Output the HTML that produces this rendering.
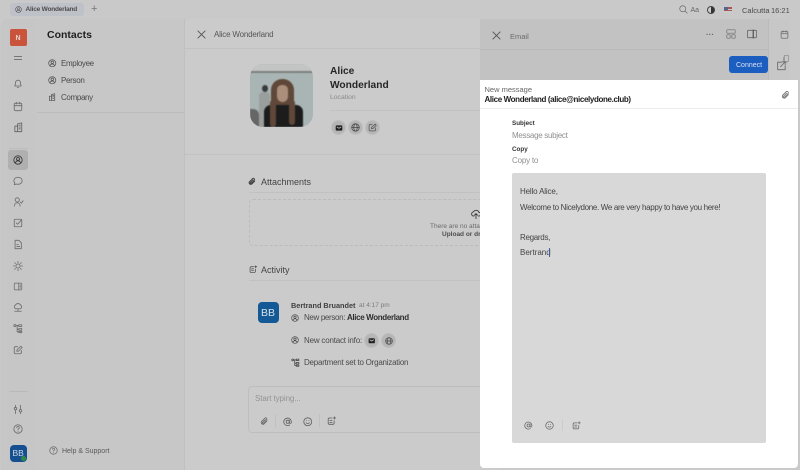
<!DOCTYPE html>
<html><head><meta charset="utf-8"><style>
html,body{margin:0;padding:0}
body{width:800px;height:470px;overflow:hidden;position:relative;background:#c9c9c9;font-family:"Liberation Sans",sans-serif;color:#3a3a3a}
.a{position:absolute}
.t{position:absolute;white-space:nowrap;line-height:1}
svg.i{position:absolute;fill:none;stroke:#6b6b6b;stroke-width:2;stroke-linecap:round;stroke-linejoin:round}
.c{position:absolute;width:15px;height:15px;border-radius:50%;background:#b5b5b5;border:0.5px solid #bebebe;box-sizing:border-box}
</style></head><body>
<svg width="0" height="0" style="position:absolute"><defs>
<symbol id="user" viewBox="0 0 24 24"><circle cx="12" cy="12" r="10"/><circle cx="12" cy="9.500" r="3.500"/><path d="M5.500 19c1.500-3.500 3.800-5 6.500-5s5 1.500 6.500 5"/></symbol>
<symbol id="bld" viewBox="0 0 24 24"><path d="M10 21V4l9-2v19zM10 21H4V9h6M13 7h3M13 11h3M13 15h3"/></symbol>
<symbol id="mail" viewBox="0 0 24 24"><rect x="3" y="5" width="18" height="14" rx="2" fill="#222" stroke="#222"/><path d="M6 9l6 4 6-4" stroke="#ddd"/></symbol>
<symbol id="globe" viewBox="0 0 24 24"><circle cx="12" cy="12" r="10"/><ellipse cx="12" cy="12" rx="4.500" ry="10"/><path d="M2 12h20"/></symbol>
<symbol id="edit" viewBox="0 0 24 24"><path d="M20 13v5a3 3 0 0 1-3 3H6a3 3 0 0 1-3-3V7a3 3 0 0 1 3-3h5"/><path d="M9 15l1-4 9-8 3 3-9 9z"/></symbol>
<symbol id="at" viewBox="0 0 24 24"><circle cx="12" cy="12" r="4"/><path d="M16 8v5.500a2.500 2.500 0 0 0 5 0V12a9.500 9.500 0 1 0-4 8"/></symbol>
<symbol id="smile" viewBox="0 0 24 24"><circle cx="12" cy="12" r="10"/><path d="M8 14.500c2 2.500 6 2.500 8 0M9 9v.5M15 9v.5"/></symbol>
<symbol id="act" viewBox="0 0 24 24"><path d="M13 5H6a3 3 0 0 0-3 3v10a3 3 0 0 0 3 3h9a3 3 0 0 0 3-3v-6"/><path d="M7 11h6M7 16h6M19 2v6M16 5h6"/></symbol>
<symbol id="clip" viewBox="0 0 24 24"><path d="M20 11l-8.500 8.500a5 5 0 0 1-7-7l9-9a3.500 3.500 0 0 1 5 5l-9 9a1.600 1.600 0 0 1-2.500-2.500l8-8"/></symbol>
<symbol id="tree" viewBox="0 0 24 24"><circle cx="4.500" cy="5" r="2.500"/><path d="M7 5h7M14 3h7v4h-7zM14 12h7v4h-7zM14 19h7v3h-7zM10 5v15h4M10 14h4"/></symbol>
</defs></svg>

<!-- top bar -->
<div class="a" style="left:10px;top:3px;width:74px;height:13px;background:#bfc1c9;border-radius:3px"></div>
<svg class="i" style="left:15px;top:6px;stroke:#555" width="7" height="7"><use href="#user"/></svg>
<div class="t" style="left:25.500px;top:7px;font-size:6.500px;font-weight:700;letter-spacing:-.2px;color:#4c4c4c">Alice Wonderland</div>
<div class="t" style="left:91px;top:3.500px;font-size:11px;color:#777">+</div>
<svg class="i" style="left:679px;top:5px;stroke:#666;stroke-width:1.800" width="9" height="9" viewBox="0 0 24 24"><circle cx="10" cy="10" r="8"/><path d="M16 16l6 6"/></svg>
<div class="t" style="left:690.500px;top:6.500px;font-size:7px;color:#666">Aa</div>
<div class="a" style="left:707px;top:5.500px;width:6px;height:6px;border:1px solid #444;border-radius:50%;background:linear-gradient(90deg,#ccc 50%,#333 50%)"></div>
<div class="a" style="left:724px;top:7px;width:8px;height:6px;background:linear-gradient(#a55 0 30%,#ccc 30% 50%,#a55 50% 70%,#ccc 70%)"></div>
<div class="a" style="left:724px;top:7px;width:4px;height:3px;background:#56658f"></div>
<div class="t" style="left:742px;top:6.500px;font-size:7.500px;color:#4a4a4a">Calcutta</div>
<div class="t" style="left:771px;top:6.500px;font-size:7.500px;color:#4a4a4a">16:21</div>

<!-- main panels -->
<div class="a" style="left:1px;top:19px;width:36px;height:451px;background:#c6c6c6;border-radius:5px 0 0 0;border-right:1px solid #bfbfbf"></div>
<div class="a" style="left:37px;top:19px;width:147px;height:451px;background:#c7c7c7;border-right:1px solid #c0c0c0"></div>
<div class="a" style="left:37px;top:112px;width:147px;height:1px;background:#bcbcbc"></div>
<div class="a" style="left:185px;top:19px;width:315px;height:451px;background:#cbcbcb;border-radius:5px 0 0 0"></div>
<div class="a" style="left:185px;top:48px;width:300px;height:1px;background:#c2c2c2"></div>
<div class="a" style="left:185px;top:154px;width:300px;height:1px;background:#c2c2c2"></div>
<div class="a" style="left:480px;top:19px;width:310px;height:62px;background:#c2c2c2;border-radius:0 5px 0 0"></div>
<div class="a" style="left:768px;top:19px;width:22px;height:62px;background:#c7c7c7;border-left:1px solid #bbb;border-radius:0 5px 0 0;box-sizing:border-box"></div>
<div class="a" style="left:480px;top:49px;width:288px;height:1px;background:#bababa"></div>

<!-- sidebar -->
<div class="a" style="left:9.500px;top:29px;width:17px;height:17px;background:#c9533b;border-radius:2px"></div>
<div class="t" style="left:15.500px;top:34.500px;font-size:7px;font-weight:700;color:#e8d5d0">N</div>
<div class="a" style="left:14px;top:56px;width:8px;height:1px;background:#777"></div>
<div class="a" style="left:14px;top:59px;width:8px;height:1px;background:#777"></div>
<svg class="i" style="left:13px;top:78px" width="10" height="11" viewBox="0 0 24 24"><path d="M4 18c2-2 2-5 2-8a6 6 0 0 1 12 0c0 3 0 6 2 8zM10 21h4"/></svg>
<svg class="i" style="left:13px;top:101px" width="10" height="11" viewBox="0 0 24 24"><rect x="3" y="4" width="18" height="18" rx="3"/><path d="M3 10h18M8 2v4M16 2v4"/></svg>
<svg class="i" style="left:13px;top:122px" width="11" height="11"><use href="#bld"/></svg>
<div class="a" style="left:9px;top:148px;width:19px;height:1px;background:#bcbcbc"></div>
<div class="a" style="left:8px;top:150px;width:20px;height:20px;background:#b0b0b0;border-radius:3px"></div>
<svg class="i" style="left:13px;top:155px;stroke:#333" width="10" height="10"><use href="#user"/></svg>
<svg class="i" style="left:13px;top:176px" width="10" height="10" viewBox="0 0 24 24"><path d="M12 3c5.500 0 10 3.500 10 8.500S17.500 20 12 20c-1.500 0-3-.3-4-.7L3 21l1.500-4C3 15.500 2 13.500 2 11.500 2 6.500 6.500 3 12 3z"/></svg>
<svg class="i" style="left:13px;top:197px" width="11" height="10" viewBox="0 0 24 24"><circle cx="9" cy="7" r="5"/><path d="M2 22c0-5 3-8 7-8s7 3 7 8M16 12l3 3 4-6"/></svg>
<svg class="i" style="left:13px;top:218px" width="10" height="10" viewBox="0 0 24 24"><rect x="3" y="3" width="18" height="18" rx="2"/><path d="M8 12l3 3 9-10"/></svg>
<svg class="i" style="left:13px;top:239px" width="10" height="11" viewBox="0 0 24 24"><path d="M5 2h9l6 6v14H5zM9 17h7M9 12h4"/></svg>
<svg class="i" style="left:13px;top:261px" width="10" height="10" viewBox="0 0 24 24"><circle cx="12" cy="12" r="5"/><path d="M12 1v3M12 20v3M1 12h3M20 12h3M4 4l2 2M18 18l2 2M4 20l2-2M18 6l2-2"/></svg>
<svg class="i" style="left:13px;top:282px" width="10" height="9" viewBox="0 0 24 24"><rect x="2" y="3" width="20" height="18" rx="2"/><path d="M14 3v18M17 8h2M17 12h2M17 16h2"/></svg>
<svg class="i" style="left:13px;top:302px" width="10" height="11" viewBox="0 0 24 24"><path d="M6 15a5 5 0 0 1 0-9 7 7 0 0 1 12 0 5 5 0 0 1 0 9zM12 15v5M4 21h16"/></svg>
<svg class="i" style="left:13px;top:323px" width="10" height="11"><use href="#tree"/></svg>
<svg class="i" style="left:13px;top:345px" width="10" height="10"><use href="#edit"/></svg>
<div class="a" style="left:9px;top:391px;width:19px;height:1px;background:#b9b9b9"></div>
<svg class="i" style="left:13px;top:404px" width="10" height="11" viewBox="0 0 24 24"><path d="M6 2v5M6 14v8M18 2v10M18 19v3"/><circle cx="6" cy="10" r="3"/><circle cx="18" cy="15" r="3"/></svg>
<svg class="i" style="left:13px;top:424px" width="10" height="10" viewBox="0 0 24 24"><circle cx="12" cy="12" r="10"/><path d="M9 9a3 3 0 1 1 4.500 2.600c-1 .6-1.500 1.200-1.500 2.400M12 18v.5"/></svg>
<div class="a" style="left:9.500px;top:444.500px;width:17px;height:17px;background:#154f8f;border-radius:4px"></div>
<div class="t" style="left:12.500px;top:449px;font-size:8.500px;color:#cfd8e4">BB</div>
<div class="a" style="left:21px;top:456px;width:5px;height:5px;background:#2e8b45;border-radius:50%"></div>

<!-- contacts -->
<div class="t" style="left:47px;top:30px;font-size:10.500px;font-weight:700;color:#1f1f1f">Contacts</div>
<svg class="i" style="left:48px;top:59px;stroke:#4d4d4d" width="8.500" height="8.500"><use href="#user"/></svg>
<div class="t" style="left:61px;top:60px;font-size:8px;letter-spacing:-.35px;color:#4a4a4a">Employee</div>
<svg class="i" style="left:48px;top:76px;stroke:#4d4d4d" width="8.500" height="8.500"><use href="#user"/></svg>
<div class="t" style="left:61px;top:77px;font-size:8px;letter-spacing:-.3px;color:#4a4a4a">Person</div>
<svg class="i" style="left:48px;top:93px;stroke:#4d4d4d" width="8.500" height="8.500"><use href="#bld"/></svg>
<div class="t" style="left:61px;top:94px;font-size:8px;letter-spacing:-.35px;color:#4a4a4a">Company</div>
<svg class="i" style="left:49px;top:446px" width="9" height="9" viewBox="0 0 24 24"><circle cx="12" cy="12" r="10"/><path d="M9 9a3 3 0 1 1 4.500 2.600c-1 .6-1.500 1.200-1.500 2.400M12 18v.5"/></svg>
<div class="t" style="left:62px;top:447.500px;font-size:7px;color:#5a5a5a">Help &amp; Support</div>

<!-- detail -->
<svg class="i" style="left:197px;top:30px;stroke:#555" width="9" height="9" viewBox="0 0 10 10"><path d="M1 1l8 8M9 1l-8 8" stroke-width="1"/></svg>
<div class="t" style="left:214px;top:30.500px;font-size:8px;letter-spacing:-.2px;color:#565656">Alice Wonderland</div>

<div class="a" style="left:249.500px;top:64px;width:63.500px;height:63px;border-radius:13px;overflow:hidden;background:#a9b4b4">
 <div style="position:absolute;inset:0;filter:blur(.6px)">
 <div class="a" style="left:0;top:0;width:64px;height:7px;background:#c3c5c4"></div>
 <div class="a" style="left:0;top:7px;width:64px;height:1.500px;background:#7d807c"></div>
 <div class="a" style="left:9px;top:28px;width:11px;height:35px;background:#9a9f9e;border-radius:4px 4px 0 0"></div>
 <div class="a" style="left:12px;top:21px;width:6px;height:7px;background:#3a3a3a;border-radius:50%"></div>
 <div class="a" style="left:0;top:45px;width:9px;height:18px;background:#666;border-radius:0 6px 0 0"></div>
 <div class="a" style="left:21px;top:15px;width:23px;height:46px;background:#5f4839;border-radius:11px 11px 5px 5px"></div>
 <div class="a" style="left:14px;top:41px;width:39px;height:22px;background:#1c1c1c;border-radius:7px 7px 0 0"></div>
 <div class="a" style="left:20px;top:36px;width:6px;height:27px;background:#5f4839;border-radius:3px"></div>
 <div class="a" style="left:39px;top:36px;width:6px;height:25px;background:#5f4839;border-radius:3px"></div>
 <div class="a" style="left:27px;top:21px;width:11px;height:17px;background:#ac8e7c;border-radius:6px 6px 7px 7px"></div>
 </div>
</div>
<div class="t" style="left:330px;top:64.500px;font-size:10.200px;font-weight:700;line-height:14px;color:#262626;white-space:normal;width:70px">Alice Wonderland</div>
<div class="t" style="left:330px;top:95px;font-size:6.800px;color:#8a8a8a">Location</div>
<div class="a" style="left:330px;top:110px;width:155px;height:1px;background:#c2c2c2"></div>
<div class="c" style="left:331px;top:120px"></div>
<svg class="i" style="left:334.500px;top:123.500px" width="8" height="8"><use href="#mail"/></svg>
<div class="c" style="left:348px;top:120px"></div>
<svg class="i" style="left:351px;top:123px;stroke:#444" width="9" height="9"><use href="#globe"/></svg>
<div class="c" style="left:365px;top:120px"></div>
<svg class="i" style="left:368px;top:123px;stroke:#555" width="9" height="9"><use href="#edit"/></svg>

<svg class="i" style="left:248px;top:177px;stroke:#444;stroke-width:3" width="8" height="9"><use href="#clip"/></svg>
<div class="t" style="left:261px;top:178px;font-size:9px;color:#444">Attachments</div>
<div class="a" style="left:249px;top:192px;width:240px;height:1px;background:#c1c1c1"></div>
<div class="a" style="left:249px;top:199px;width:240px;height:47px;border:1px dashed #bbb;border-radius:4px;box-sizing:border-box"></div>
<svg class="i" style="left:471px;top:209px;stroke:#333" width="10" height="10" viewBox="0 0 24 24"><path d="M7 17a5 5 0 0 1-1-10 7 7 0 0 1 13 1 4.500 4.500 0 0 1-1 9M12 23V12M8 15l4-4 4 4"/></svg>
<div class="t" style="left:430px;top:223.500px;font-size:6.500px;color:#6b6b6b">There are no attachments</div>
<div class="t" style="left:442px;top:231.500px;font-size:6.500px;font-weight:700;color:#4d4d4d">Upload or drop</div>

<svg class="i" style="left:249px;top:265px;stroke:#444" width="8.500" height="8.500"><use href="#act"/></svg>
<div class="t" style="left:261px;top:266px;font-size:9px;color:#444">Activity</div>
<div class="a" style="left:249px;top:280px;width:240px;height:1px;background:#c1c1c1"></div>
<div class="a" style="left:257.500px;top:302px;width:21.500px;height:21px;background:#135996;border-radius:4px"></div>
<div class="t" style="left:261px;top:308px;font-size:10.500px;color:#d6e0ea">BB</div>
<div class="t" style="left:291px;top:302px;font-size:7.300px;font-weight:700;color:#3f3f3f">Bertrand Bruandet</div>
<div class="t" style="left:359px;top:303px;font-size:6.500px;color:#7c7c7c">at 4:17 pm</div>
<svg class="i" style="left:291px;top:313.500px;stroke:#444" width="8" height="8"><use href="#user"/></svg>
<div class="t" style="left:304px;top:314px;font-size:8px;letter-spacing:-.35px;color:#4a4a4a">New person: <b style="color:#2f2f2f">Alice Wonderland</b></div>
<svg class="i" style="left:291px;top:336px;stroke:#444" width="8" height="8"><use href="#user"/></svg>
<div class="t" style="left:304px;top:337px;font-size:8px;letter-spacing:-.2px;color:#4a4a4a">New contact info:</div>
<div class="c" style="left:364px;top:332.500px"></div>
<svg class="i" style="left:368px;top:336.500px" width="7.500" height="7.500"><use href="#mail"/></svg>
<div class="c" style="left:381px;top:332.500px"></div>
<svg class="i" style="left:385px;top:336.500px;stroke:#444" width="8" height="8"><use href="#globe"/></svg>
<svg class="i" style="left:291px;top:358px;stroke:#444" width="9" height="9"><use href="#tree"/></svg>
<div class="t" style="left:304px;top:358.500px;font-size:8px;letter-spacing:-.23px;color:#4a4a4a">Department set to Organization</div>

<div class="a" style="left:248px;top:386px;width:240px;height:47px;border:1px solid #bebebe;border-radius:4px;box-sizing:border-box"></div>
<div class="t" style="left:255px;top:394.500px;font-size:8px;letter-spacing:-.1px;color:#949494">Start typing...</div>
<svg class="i" style="left:260px;top:417px;stroke:#5c5c5c" width="8.500" height="8.500"><use href="#clip"/></svg>
<div class="a" style="left:275px;top:414px;width:1px;height:13px;background:#c0c0c0"></div>
<svg class="i" style="left:283px;top:416.500px;stroke:#5c5c5c" width="9.500" height="9.500"><use href="#at"/></svg>
<svg class="i" style="left:303px;top:416.500px;stroke:#5c5c5c" width="9.500" height="9.500"><use href="#smile"/></svg>
<div class="a" style="left:319px;top:414px;width:1px;height:13px;background:#c0c0c0"></div>
<svg class="i" style="left:327px;top:416px;stroke:#5c5c5c" width="9.500" height="9.500"><use href="#act"/></svg>

<!-- Email header -->
<svg class="i" style="left:492px;top:31px;stroke:#555" width="9" height="9" viewBox="0 0 10 10"><path d="M1 1l8 8M9 1l-8 8" stroke-width="1"/></svg>
<div class="t" style="left:510px;top:33px;font-size:7.500px;color:#6a6a6a">Email</div>
<div class="t" style="left:706px;top:30.500px;font-size:8px;font-weight:700;color:#666">···</div>
<svg class="i" style="left:726px;top:29px;stroke-width:1.600" width="10" height="10" viewBox="0 0 24 24"><rect x="2" y="2" width="20" height="8" rx="1"/><rect x="2" y="14" width="8" height="8" rx="1"/><rect x="14" y="14" width="8" height="8" rx="1"/></svg>
<svg class="i" style="left:747px;top:29px;stroke:#555;stroke-width:1.600" width="10" height="10" viewBox="0 0 24 24"><rect x="1" y="3" width="22" height="18" rx="3"/><path d="M15 3v18" stroke-width="3"/></svg>
<svg class="i" style="left:780px;top:30px" width="9" height="9" viewBox="0 0 24 24"><rect x="3" y="4" width="18" height="18" rx="3"/><path d="M3 10h18M8 2v4M16 2v4"/></svg>
<div class="a" style="left:729px;top:56px;width:39px;height:17px;background:#1c5dc0;border-radius:3px"></div>
<div class="t" style="left:736px;top:61.500px;font-size:7px;color:#d9e2f1">Connect</div>
<svg class="i" style="left:776px;top:60px;stroke:#666" width="10" height="11" viewBox="0 0 24 24"><path d="M14 4H4v18h18V12M11 15L22 3M15 3h7v7"/></svg>
<svg class="i" style="left:783px;top:55px;stroke:#777;stroke-width:1" width="6" height="8" viewBox="0 0 12 16"><path d="M3 1h8v12H3zM1 4v11h7"/></svg>

<!-- Email panel -->
<div class="a" style="left:480px;top:80px;width:318px;height:388px;background:#fff;border-radius:0 0 4px 4px"></div>
<div class="a" style="left:480px;top:108px;width:318px;height:1px;background:#ececec"></div>
<div class="t" style="left:484.500px;top:86px;font-size:7.500px;color:#666">New message</div>
<div class="t" style="left:484.500px;top:96px;font-size:8px;font-weight:700;letter-spacing:-.37px;color:#1d1d1d">Alice Wonderland (alice@nicelydone.club)</div>
<svg class="i" style="left:781px;top:90px;stroke:#666" width="9" height="10"><use href="#clip"/></svg>
<div class="t" style="left:512px;top:121px;font-size:6.300px;font-weight:700;color:#333">Subject</div>
<div class="t" style="left:512px;top:131.500px;font-size:8px;letter-spacing:-.3px;color:#8f8f8f">Message subject</div>
<div class="t" style="left:512px;top:147px;font-size:6.300px;font-weight:700;color:#333">Copy</div>
<div class="t" style="left:512px;top:156.500px;font-size:8px;letter-spacing:-.2px;color:#8f8f8f">Copy to</div>
<div class="a" style="left:512px;top:173px;width:254px;height:270px;background:#d8d8d8;border-radius:2px"></div>
<div class="t" style="left:520px;top:188px;font-size:8px;letter-spacing:-.15px;color:#444">Hello Alice,</div>
<div class="t" style="left:520px;top:203.500px;font-size:8px;letter-spacing:-.33px;color:#444">Welcome to Nicelydone. We are very happy to have you here!</div>
<div class="t" style="left:520px;top:234px;font-size:8px;letter-spacing:-.3px;color:#444">Regards,</div>
<div class="t" style="left:520px;top:249px;font-size:8px;color:#444">Bertrand</div>
<div class="a" style="left:549px;top:248px;width:.7px;height:9px;background:#3f5f9f"></div>
<svg class="i" style="left:524px;top:421px;stroke:#666" width="9" height="9"><use href="#at"/></svg>
<svg class="i" style="left:545px;top:421px;stroke:#666" width="9" height="9"><use href="#smile"/></svg>
<div class="a" style="left:562px;top:420px;width:1px;height:11px;background:#cbcbcb"></div>
<svg class="i" style="left:571.500px;top:420.500px;stroke:#666" width="9" height="9"><use href="#act"/></svg>
</body></html>
